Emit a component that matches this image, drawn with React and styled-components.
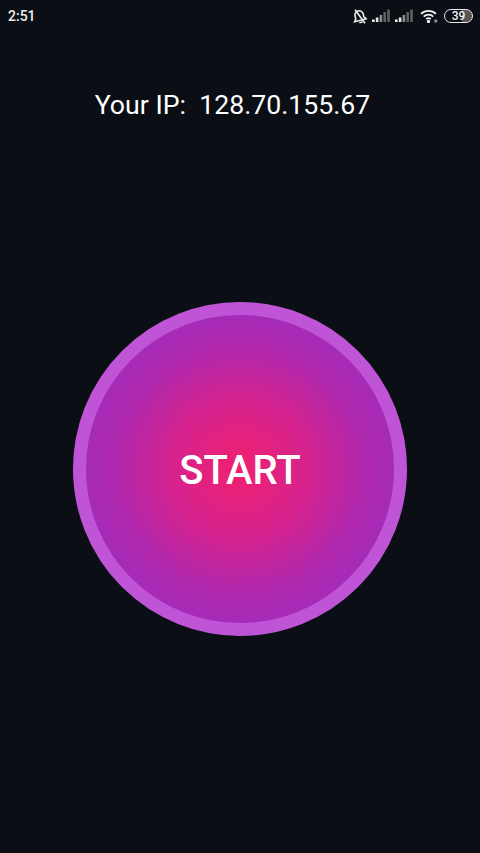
import React from 'react'
import styled, { createGlobalStyle } from 'styled-components'

const GlobalStyle = createGlobalStyle`
  html, body {
    margin: 0;
    padding: 0;
    background: #0b0f15;
  }
  * {
    box-sizing: border-box;
  }
`

const SignalIcon = () => (
  <svg width="18" height="14" viewBox="0 0 18 14">
    <rect x="0" y="10.5" width="2.6" height="2.5" fill="#f0f0f0" />
    <rect x="3.8" y="8.5" width="2.6" height="4.5" fill="#e6e6e6" />
    <rect x="7.6" y="6" width="2.6" height="7" fill="#8c8c8c" />
    <rect x="11.4" y="3" width="2.6" height="10" fill="#5f5f5f" />
    <rect x="15.2" y="0.5" width="2.6" height="12.5" fill="#5f5f5f" />
  </svg>
)

const App = () => {
  return (
    <Screen>
      <GlobalStyle />
      <StatusBar>
        <Clock>2:51</Clock>
        <StatusIcons>
          <svg width="15" height="15" viewBox="0 0 15 15" fill="none" stroke="#ececec" strokeWidth="1.6">
            <g transform="rotate(-14 7.5 7.5)">
              <path d="M1.5 11.5h12l-1.8-2.5V6a4.2 4.2 0 0 0-8.4 0v3z" />
              <path d="M5.8 13.6h3.4" />
            </g>
            <path d="M3 0.8l10 13.4" />
          </svg>
          <SignalIcon />
          <SignalIcon />
          <WifiIcon width="18" height="14" viewBox="0 0 18 14" fill="none" stroke="#f2f2f2" strokeWidth="1.8">
            <path d="M1 4.8a11 11 0 0 1 15 0" />
            <path d="M3.7 7.6a7 7 0 0 1 9.6 0" />
            <path d="M6.2 10.2a3.4 3.4 0 0 1 4.6 0" />
            <circle cx="8.5" cy="12.4" r="0.8" fill="#f2f2f2" />
            <circle cx="15.8" cy="12" r="1.7" fill="#8a8a8a" stroke="none" />
          </WifiIcon>
          <Battery>39</Battery>
        </StatusIcons>
      </StatusBar>
      <IpLine>Your IP:&nbsp; 128.70.155.67</IpLine>
      <Main>
        <StartButton>START</StartButton>
      </Main>
    </Screen>
  )
}

export default App

const Screen = styled.div`
  width: 480px;
  height: 853px;
  overflow: hidden;
  background: #0b0f15;
  display: flex;
  flex-direction: column;
  font-family: Roboto, "Liberation Sans", sans-serif;
  color: #fff;
`
const StatusBar = styled.div`
  height: 32px;
  padding: 0 7px 0 8px;
  display: flex;
  align-items: center;
  justify-content: space-between;
`
const Clock = styled.span`
  font-size: 14px;
  font-weight: 500;
  color: #eeeeee;
`
const StatusIcons = styled.div`
  display: flex;
  align-items: center;
  gap: 5px;
`
const WifiIcon = styled.svg`
  margin-left: 2px;
`
const Battery = styled.span`
  width: 29px;
  height: 14px;
  margin-left: 1px;
  border: 1.4px solid #e8e8e8;
  border-radius: 7px;
  display: flex;
  align-items: center;
  justify-content: center;
  font-size: 12px;
  font-weight: 500;
  color: #f2f2f2;
  background: linear-gradient(to right, #0b0f15 62%, #555 62%);
`
const IpLine = styled.div`
  margin-top: 56px;
  padding-right: 15px;
  text-align: center;
  font-size: 26.7px;
  line-height: 34px;
`
const Main = styled.div`
  margin-top: 180px;
  display: flex;
  justify-content: center;
`
const StartButton = styled.button`
  width: 334px;
  height: 334px;
  padding: 3px 0 0;
  border: 13px solid #bf55d6;
  border-radius: 50%;
  background: radial-gradient(circle closest-side at center, #f0206e 0%, #d5238f 45%, #b028ad 80%, #a52bb8 100%);
  color: #fff;
  font-family: inherit;
  font-size: 40px;
  font-weight: 500;
`
